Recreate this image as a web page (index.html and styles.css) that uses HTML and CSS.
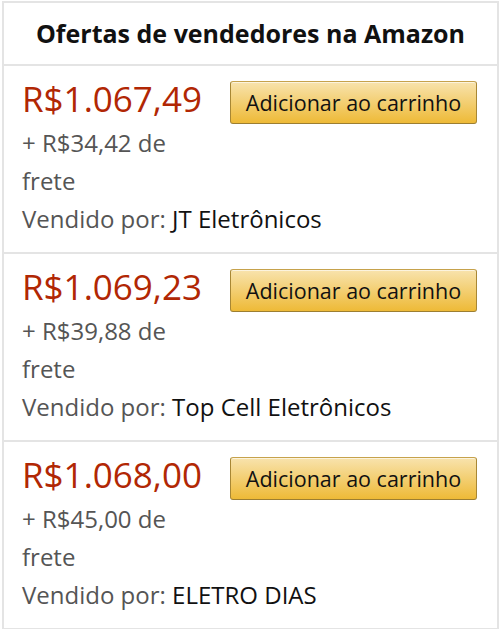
FILE: index.html
```html
<!DOCTYPE html>
<html lang="pt-BR">
<head>
    <meta charset="UTF-8">
    <meta name="viewport" content="width=device-width, initial-scale=1.0">
    <title>Ofertas de vendedores na Amazon</title>
    <link rel="stylesheet" href="styles.css">
</head>
<body>
    <div class="offers">
        <h1 class="offers-title">Ofertas de vendedores na Amazon</h1>

        <div class="offer">
            <div class="offer-top">
                <div class="offer-prices">
                    <div class="price">R$1.067,49</div>
                    <div class="shipping">+ R$34,42 de frete</div>
                </div>
                <button class="add-btn">Adicionar ao carrinho</button>
            </div>
            <div class="seller">Vendido por: <span class="seller-name">JT Eletrônicos</span></div>
        </div>

        <div class="offer">
            <div class="offer-top">
                <div class="offer-prices">
                    <div class="price">R$1.069,23</div>
                    <div class="shipping">+ R$39,88 de frete</div>
                </div>
                <button class="add-btn">Adicionar ao carrinho</button>
            </div>
            <div class="seller">Vendido por: <span class="seller-name">Top Cell Eletrônicos</span></div>
        </div>

        <div class="offer">
            <div class="offer-top">
                <div class="offer-prices">
                    <div class="price">R$1.068,00</div>
                    <div class="shipping">+ R$45,00 de frete</div>
                </div>
                <button class="add-btn">Adicionar ao carrinho</button>
            </div>
            <div class="seller">Vendido por: <span class="seller-name">ELETRO DIAS</span></div>
        </div>
    </div>
</body>
</html>
```

FILE: styles.css
```css
body {
    margin: 0;
    background: #fff;
    font-family: "Open Sans", "Noto Sans", Arial, sans-serif;
    color: #111;
}
.offers {
    margin: 1px 1px 0 2px;
    border: 2px solid #e4e4e4;
    border-bottom: none;
}
.offers-title {
    margin: 0;
    height: 61px;
    line-height: 61px;
    text-align: center;
    font-size: 25px;
    font-weight: bold;
    color: #111;
    border-bottom: 2px solid #e4e4e4;
}
.offer {
    padding: 15px 20px 14px 18px;
    border-bottom: 2px solid #e4e4e4;
}
.offer-top {
    display: flex;
    justify-content: space-between;
    align-items: flex-start;
}
.offer-prices {
    width: 195px;
}
.price {
    font-size: 35px;
    line-height: 36px;
    color: #b12704;
}
.shipping {
    margin-top: 7px;
    font-size: 24px;
    line-height: 38px;
    color: #555;
}
.seller {
    font-size: 24px;
    line-height: 38px;
    color: #555;
}
.seller-name { color: #111; }
.add-btn {
    width: 247px;
    height: 43px;
    padding: 0;
    font-family: inherit;
    font-size: 21.5px;
    color: #111;
    background: linear-gradient(to bottom, #f8e3ad, #eeba37);
    border: 1px solid #a88734;
    border-color: #c6a24c #a88734 #9c7e31;
    border-radius: 3px;
    box-shadow: inset 0 1px 0 rgba(255,255,255,0.6);
    cursor: pointer;
}
```
